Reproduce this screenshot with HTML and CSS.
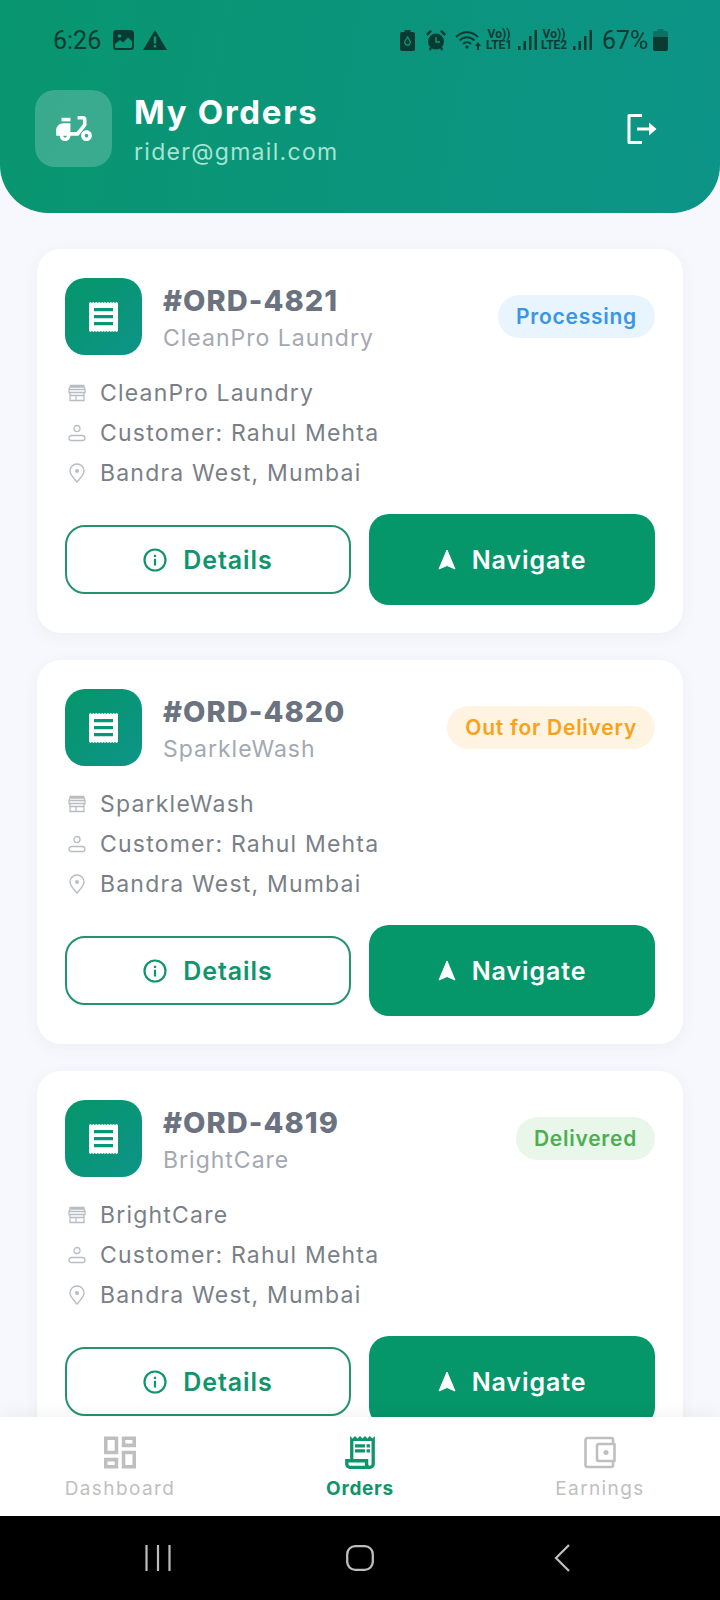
FILE: index.html
```html
<!DOCTYPE html>
<html lang="en">
<head>
    <meta charset="UTF-8">
    <meta name="viewport" content="width=device-width, initial-scale=1.0">
    <title>My Orders</title>
    <link rel="stylesheet" href="styles.css">
</head>
<body>
    <!-- Shared icons -->
    <svg class="sprite" aria-hidden="true">
        <symbol id="i-receipt" viewBox="0 0 29 30">
            <path fill="#fff" d="M0 1l1.450-1 1.450 1 1.450-1 1.450 1 1.450-1 1.450 1 1.450-1 1.450 1 1.450-1 1.450 1 1.450-1 1.450 1 1.450-1 1.450 1 1.450-1 1.450 1 1.450-1 1.450 1 1.450-1 1.450 1V29l-1.450 1-1.450-1-1.450 1-1.450-1-1.450 1-1.450-1-1.450 1-1.450-1-1.450 1-1.450-1-1.450 1-1.450-1-1.450 1-1.450-1-1.450 1-1.450-1-1.450 1-1.450-1-1.450 1-1.450-1z"/>
            <path fill="#0a9678" d="M5 6h19v3.200H5zM5 13h19v3.200H5zM5 20h19v3.200H5z"/>
        </symbol>
        <symbol id="i-store" viewBox="0 0 20 20">
            <path fill="none" stroke="currentColor" stroke-width="1.300" d="M2.500 2.500h15M1.500 6.500h17M2 6.500v3h16v-3l-1-2.500H3zM3 9.500v8h14v-8M3 12.500h14M9 12.500v5"/>
        </symbol>
        <symbol id="i-person" viewBox="0 0 20 20">
            <circle cx="10" cy="5.500" r="3" fill="none" stroke="currentColor" stroke-width="1.300"/>
            <path fill="none" stroke="currentColor" stroke-width="1.300" d="M5 12.500h10c2 0 3 1.300 3 2.700 0 1.400-.8 2.300-2.500 2.300h-11C2.800 17.500 2 16.600 2 15.200c0-1.400 1-2.700 3-2.700z"/>
        </symbol>
        <symbol id="i-pin" viewBox="0 0 20 20">
            <path fill="none" stroke="currentColor" stroke-width="1.400" d="M10 19C6.500 15 3 11.500 3 8a7 7 0 0 1 14 0c0 3.500-3.500 7-7 11z"/>
            <circle cx="10" cy="8" r="2" fill="currentColor"/>
        </symbol>
        <symbol id="i-info" viewBox="0 0 24 24">
            <circle cx="12" cy="12" r="10.500" fill="none" stroke="currentColor" stroke-width="2.200"/>
            <path fill="currentColor" d="M10.900 10.800h2.200v6.700h-2.200zM10.900 6.800h2.200V9h-2.200z"/>
        </symbol>
        <symbol id="i-nav" viewBox="0 0 18 21">
            <path fill="currentColor" stroke="currentColor" stroke-width="1" stroke-linejoin="round" d="M9 1L1 20l8-3.500 8 3.500z"/>
        </symbol>
    </svg>

    <header class="top">
        <div class="status-bar">
            <span class="clock">6:26</span>
            <svg class="s-img" viewBox="0 0 21 20"><rect x="1" y="1" width="19" height="18" rx="2.500" fill="none" stroke="currentColor" stroke-width="2"/><path fill="currentColor" d="M2 2h17v9l-4-3.500-5 5-3-2.500-5 4z"/><circle cx="6.500" cy="6" r="1.800" fill="#0a9678"/></svg>
            <svg class="s-warn" viewBox="0 0 24 20"><path fill="currentColor" d="M12 0l12 20H0z"/><path fill="#0a9678" d="M10.800 6.500h2.400v7h-2.400zM10.800 15h2.400v2.400h-2.400z"/></svg>
            <span class="s-fill"></span>
            <svg class="s-saver" viewBox="0 0 15 21"><path fill="currentColor" d="M4.500 0h6v2H13a2 2 0 0 1 2 2v15a2 2 0 0 1-2 2H2a2 2 0 0 1-2-2V4a2 2 0 0 1 2-2h2.500z"/><path fill="none" stroke="#0a9678" stroke-width="1.300" d="M7.500 7l-3 5 1.500 3h3l1.500-3z"/></svg>
            <svg class="s-alarm" viewBox="0 0 20 21"><circle cx="10" cy="11.500" r="8" fill="currentColor"/><path fill="currentColor" d="M0 4l4-4 2 1.500L1.500 6zM20 4l-4-4-2 1.500L18.500 6zM3 18l2-1 1 2-2 2zM17 18l-2-1-1 2 2 2z"/><path fill="none" stroke="#0a9678" stroke-width="1.400" d="M10 7v5h4"/></svg>
            <svg class="s-wifi" viewBox="0 0 27 20"><path fill="none" stroke="currentColor" stroke-width="2" d="M1 7c6.500-6.500 15.500-6.500 22 0M4.500 10.500c4.500-4.500 10.500-4.500 15 0M8 14c2.500-2.500 5.500-2.500 8 0"/><circle cx="12" cy="17" r="1.600" fill="currentColor"/><path fill="currentColor" d="M22 20v-4h-2l3-4 3 4h-2v4z"/></svg>
            <span class="volte">Vo))<br>LTE1</span>
            <svg class="s-bars" viewBox="0 0 19 20"><path fill="currentColor" d="M0 16h2.500v4H0zM5.500 11H8v9H5.500zM11 6h2.500v14H11zM16.500 0H19v20h-2.500z"/></svg>
            <span class="volte">Vo))<br>LTE2</span>
            <svg class="s-bars" viewBox="0 0 19 20"><path fill="currentColor" d="M0 16h2.500v4H0zM5.500 11H8v9H5.500zM11 6h2.500v14H11zM16.500 0H19v20h-2.500z"/></svg>
            <span class="pct">67%</span>
            <svg class="s-batt" viewBox="0 0 15 22"><path fill="currentColor" opacity=".4" d="M4.500 0h6v2H13a2 2 0 0 1 2 2v6H0V4a2 2 0 0 1 2-2h2.500z"/><path fill="currentColor" d="M0 8h15v12a2 2 0 0 1-2 2H2a2 2 0 0 1-2-2z"/></svg>
        </div>
        <div class="top-row">
            <div class="logo">
                <svg class="logo-icon" viewBox="2 3 20 14"><path fill="#fff" d="M19 5a2 2 0 0 0-2-2h-3v2h3v2.650L13.520 12H10V7H6c-2.210 0-4 1.790-4 4v3h2c0 1.660 1.340 3 3 3s3-1.340 3-3h4.480L19 8.350V5zM7 15c-.55 0-1-.45-1-1h2c0 .55-.45 1-1 1z"/><path fill="#fff" d="M5 4h5v2H5z"/><path fill="#fff" d="M19 11c-1.660 0-3 1.340-3 3s1.340 3 3 3 3-1.340 3-3-1.340-3-3-3zm0 4c-.55 0-1-.45-1-1s.45-1 1-1 1 .45 1 1-.45 1-1 1z"/></svg>
            </div>
            <div class="top-text">
                <h1>My Orders</h1>
                <p>rider@gmail.com</p>
            </div>
            <svg class="logout" viewBox="0 0 30 30"><path fill="none" stroke="#fff" stroke-width="3" stroke-linejoin="round" d="M15 1.500H2v27h13"/><path fill="none" stroke="#fff" stroke-width="3" d="M10 15h15"/><path fill="#fff" d="M22 8.500l7.500 6.500-7.500 6.500z"/></svg>
        </div>
    </header>

    <main class="orders">
        <article class="card">
            <div class="card-top">
                <div class="order-icon"><svg><use href="#i-receipt"/></svg></div>
                <div class="order-text">
                    <h2>#ORD-4821</h2>
                    <p>CleanPro Laundry</p>
                </div>
                <span class="badge processing">Processing</span>
            </div>
            <ul class="info">
                <li><svg><use href="#i-store"/></svg>CleanPro Laundry</li>
                <li><svg><use href="#i-person"/></svg>Customer: Rahul Mehta</li>
                <li><svg><use href="#i-pin"/></svg>Bandra West, Mumbai</li>
            </ul>
            <div class="actions">
                <button class="btn-details"><svg><use href="#i-info"/></svg>Details</button>
                <button class="btn-nav"><svg><use href="#i-nav"/></svg>Navigate</button>
            </div>
        </article>

        <article class="card">
            <div class="card-top">
                <div class="order-icon"><svg><use href="#i-receipt"/></svg></div>
                <div class="order-text">
                    <h2>#ORD-4820</h2>
                    <p>SparkleWash</p>
                </div>
                <span class="badge delivery">Out for Delivery</span>
            </div>
            <ul class="info">
                <li><svg><use href="#i-store"/></svg>SparkleWash</li>
                <li><svg><use href="#i-person"/></svg>Customer: Rahul Mehta</li>
                <li><svg><use href="#i-pin"/></svg>Bandra West, Mumbai</li>
            </ul>
            <div class="actions">
                <button class="btn-details"><svg><use href="#i-info"/></svg>Details</button>
                <button class="btn-nav"><svg><use href="#i-nav"/></svg>Navigate</button>
            </div>
        </article>

        <article class="card">
            <div class="card-top">
                <div class="order-icon"><svg><use href="#i-receipt"/></svg></div>
                <div class="order-text">
                    <h2>#ORD-4819</h2>
                    <p>BrightCare</p>
                </div>
                <span class="badge delivered">Delivered</span>
            </div>
            <ul class="info">
                <li><svg><use href="#i-store"/></svg>BrightCare</li>
                <li><svg><use href="#i-person"/></svg>Customer: Rahul Mehta</li>
                <li><svg><use href="#i-pin"/></svg>Bandra West, Mumbai</li>
            </ul>
            <div class="actions">
                <button class="btn-details"><svg><use href="#i-info"/></svg>Details</button>
                <button class="btn-nav"><svg><use href="#i-nav"/></svg>Navigate</button>
            </div>
        </article>
    </main>

    <nav class="tabs">
        <a class="tab">
            <svg viewBox="3 3 18 18"><path fill="currentColor" d="M19 5v2h-4V5h4M9 5v6H5V5h4m10 8v6h-4v-6h4M9 17v2H5v-2h4M21 3h-8v6h8V3zM11 3H3v10h8V3zm10 8h-8v10h8V11zm-10 4H3v6h8v-6z"/></svg>
            <span>Dashboard</span>
        </a>
        <a class="tab active">
            <svg viewBox="3 2 18 20"><path fill="currentColor" d="M19.500 3.500 18 2l-1.500 1.500L15 2l-1.500 1.500L12 2l-1.500 1.500L9 2 7.500 3.500 6 2v14H3v3c0 1.660 1.340 3 3 3h12c1.660 0 3-1.340 3-3V2l-1.500 1.500zM15 20H6c-.55 0-1-.45-1-1v-1h10v2zm4-1c0 .55-.45 1-1 1s-1-.45-1-1v-3H8V5h11v14z"/><path fill="currentColor" d="M9 7h6v2H9zM16 7h2v2h-2zM9 10h6v2H9zM16 10h2v2h-2z"/></svg>
            <span>Orders</span>
        </a>
        <a class="tab">
            <svg viewBox="0 0 32 32"><path fill="none" stroke="currentColor" stroke-width="2.600" stroke-linejoin="round" d="M29 7V3a1.500 1.500 0 0 0-1.500-1.500h-24A2 2 0 0 0 1.500 3.500v25a2 2 0 0 0 2 2h24A1.500 1.500 0 0 0 29 29v-4"/><path fill="none" stroke="currentColor" stroke-width="2.600" stroke-linejoin="round" d="M15 7.500h15.500v17H15a2 2 0 0 1-2-2v-13a2 2 0 0 1 2-2z"/><circle cx="22" cy="16" r="2.500" fill="currentColor"/></svg>
            <span>Earnings</span>
        </a>
    </nav>

    <div class="sys-nav">
        <svg class="sys-recent" viewBox="0 0 26 26"><path stroke="#bdbdbd" stroke-width="2.200" d="M1.500 0v26M13 0v26M24.500 0v26"/></svg>
        <svg class="sys-home" viewBox="0 0 28 26"><rect x="1.200" y="1.200" width="25.600" height="23.600" rx="8" fill="none" stroke="#bdbdbd" stroke-width="2.300"/></svg>
        <svg class="sys-back" viewBox="0 0 16 28"><path fill="none" stroke="#bdbdbd" stroke-width="2.300" d="M15 1L2 14l13 13"/></svg>
    </div>
</body>
</html>
```

FILE: styles.css
```css
* {
    margin: 0;
    padding: 0;
    box-sizing: border-box;
}

body {
    font-family: Inter, "Noto Sans", sans-serif;
    background: #f7f8fd;
    height: 1600px;
    overflow: hidden;
    display: flex;
    flex-direction: column;
}

.sprite {
    display: none;
}

/* Header */
.top {
    height: 213px;
    flex-shrink: 0;
    background: linear-gradient(100deg, #08966f, #0d9488);
    border-radius: 0 0 48px 48px;
    color: #fff;
}

.status-bar {
    height: 80px;
    padding: 0 52px 0 53px;
    display: flex;
    align-items: center;
    color: #0a3b33;
}

.clock {
    font-family: Roboto, sans-serif;
    font-size: 25px;
    width: 60px;
}

.s-img { width: 21px; height: 20px; }
.s-warn { width: 24px; height: 20px; margin-left: 9px; }
.s-fill { flex: 1; }
.s-saver { width: 15px; height: 21px; }
.s-alarm { width: 20px; height: 21px; margin-left: 11px; }
.s-wifi { width: 27px; height: 20px; margin-left: 9px; }
.s-bars { width: 19px; height: 20px; margin-left: 6px; }

.volte {
    font-family: Roboto, sans-serif;
    font-size: 12px;
    font-weight: 700;
    line-height: 11px;
    text-align: center;
    width: 26px;
    margin-left: 4px;
}

.pct {
    font-family: Roboto, sans-serif;
    font-size: 25px;
    margin-left: 10px;
    width: 50px;
}

.s-batt { width: 15px; height: 22px; margin-left: 1px; }

.top-row {
    display: flex;
    align-items: center;
    padding: 10px 63px 0 35px;
    gap: 22px;
}

.logo {
    width: 77px;
    height: 77px;
    border-radius: 20px;
    background: rgba(255, 255, 255, 0.2);
    display: flex;
    align-items: center;
    justify-content: center;
}

.logo-icon {
    width: 36px;
    height: 25px;
}

.top-text {
    flex: 1;
}

.top-text h1 {
    font-size: 33px;
    font-weight: 700;
    line-height: 44px;
    letter-spacing: 1.7px;
}

.top-text p {
    font-size: 23px;
    line-height: 30px;
    margin-top: 3px;
    color: #a8e3d4;
    letter-spacing: 1.3px;
}

.logout {
    width: 30px;
    height: 30px;
}

/* Order cards */
.orders {
    flex: 1;
    min-height: 0;
    overflow: hidden;
    padding: 36px 37px 0;
    display: flex;
    flex-direction: column;
    gap: 27px;
}

.card {
    flex-shrink: 0;
    height: 384px;
    background: #fff;
    border-radius: 24px;
    padding: 29px 28px;
    box-shadow: 0 4px 16px rgba(60, 70, 120, 0.05);
}

.card-top {
    display: flex;
    align-items: center;
    gap: 21px;
}

.order-icon {
    width: 77px;
    height: 77px;
    flex-shrink: 0;
    border-radius: 20px;
    background: linear-gradient(135deg, #059669, #0d9488);
    display: flex;
    align-items: center;
    justify-content: center;
}

.order-icon svg {
    width: 29px;
    height: 30px;
}

.order-text {
    flex: 1;
}

.order-text h2 {
    font-size: 29px;
    font-weight: 800;
    line-height: 40px;
    color: #6b7280;
    letter-spacing: 1.05px;
}

.order-text p {
    font-size: 23px;
    line-height: 30px;
    margin-top: 2px;
    color: #a3a8b1;
    letter-spacing: 1px;
}

.badge {
    padding: 0 18px;
    height: 43px;
    line-height: 43px;
    border-radius: 22px;
    font-size: 21px;
    font-weight: 600;
    letter-spacing: 0.75px;
}

.processing { background: #e8f4fe; color: #3a96e2; }
.delivery { background: #fff3e2; color: #f9a11b; }
.delivered { background: #e9f6ea; color: #4dae52; }

.info {
    list-style: none;
    margin-top: 18px;
}

.info li {
    height: 40px;
    display: flex;
    align-items: center;
    gap: 13px;
    padding-left: 2px;
    font-size: 23px;
    color: #7a7f87;
    letter-spacing: 1.2px;
}

.info svg {
    width: 20px;
    height: 20px;
    color: #b9bdc3;
    flex-shrink: 0;
}

.actions {
    margin-top: 21px;
    display: grid;
    grid-template-columns: 1fr 1fr;
    gap: 18px;
    align-items: center;
}

.actions button {
    display: flex;
    align-items: center;
    justify-content: center;
    gap: 16px;
    font-family: inherit;
    font-size: 25px;
    font-weight: 600;
    letter-spacing: 0.9px;
    border-radius: 20px;
}

.actions svg {
    flex-shrink: 0;
}

.btn-details {
    height: 69px;
    background: #fff;
    color: #0f946c;
    border: 2px solid #24926f;
}

.btn-details svg {
    width: 24px;
    height: 24px;
}

.btn-nav {
    height: 91px;
    background: #059669;
    color: #fff;
    border: none;
}

.btn-nav svg {
    width: 18px;
    height: 21px;
}

/* Bottom tabs */
.tabs {
    height: 99px;
    flex-shrink: 0;
    background: #fff;
    display: grid;
    grid-template-columns: 240px 240px 240px;
    position: relative;
    box-shadow: 0 -6px 14px rgba(0, 0, 0, 0.04);
}

.tab {
    display: flex;
    flex-direction: column;
    align-items: center;
    padding-top: 19px;
    color: #bfbfbf;
    font-size: 19px;
    letter-spacing: 1.4px;
}

.tab svg {
    width: 32px;
    height: 33px;
}

.tab span {
    margin-top: 8px;
    line-height: 24px;
}

.tab.active {
    color: #0f946c;
    font-weight: 700;
    letter-spacing: 0.7px;
}

/* Android buttons */
.sys-nav {
    height: 84px;
    flex-shrink: 0;
    background: #000;
    display: flex;
    justify-content: space-between;
    align-items: center;
    padding: 0 150px 0 145px;
}

.sys-recent { width: 26px; height: 26px; }
.sys-home { width: 28px; height: 26px; margin-left: -5px; }
.sys-back { width: 16px; height: 28px; }
```
